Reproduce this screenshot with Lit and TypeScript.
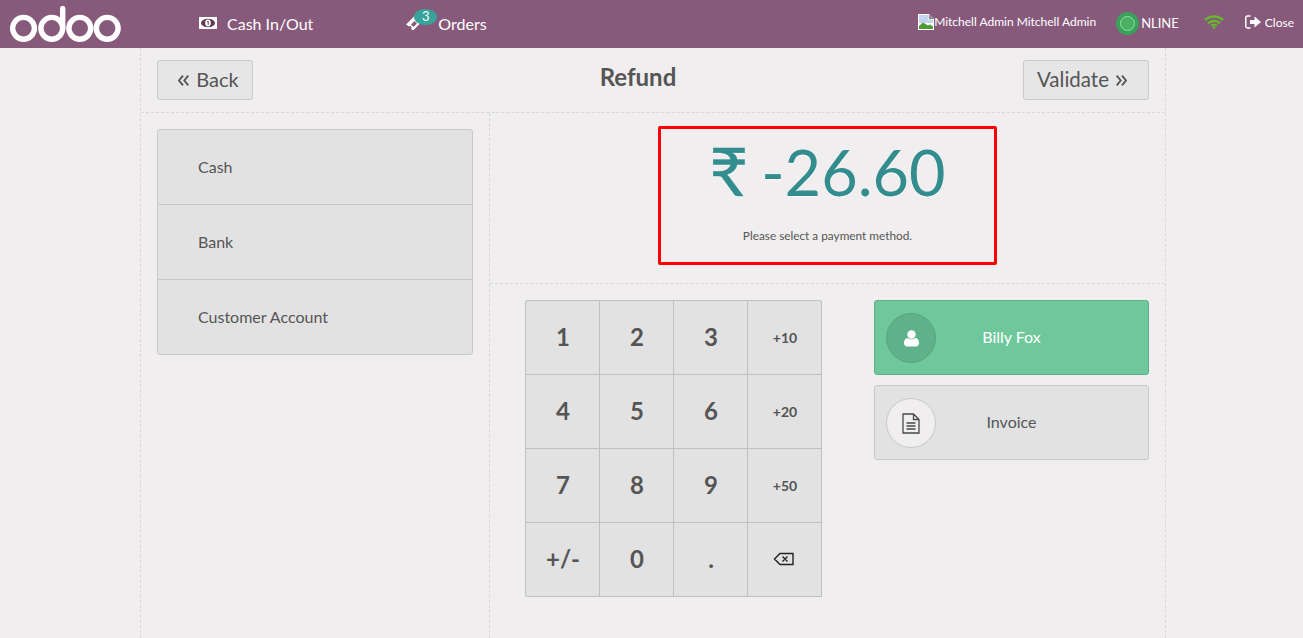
import { LitElement, html, css } from "lit";
import { customElement } from "lit/decorators.js";

const KEYS = ["1", "2", "3", "+10", "4", "5", "6", "+20", "7", "8", "9", "+50", "+/-", "0", "."];

@customElement("app-root")
export class AppRoot extends LitElement {
  static styles = css`
    :host {
      display: flex;
      flex-direction: column;
      height: 638px;
      overflow: hidden;
      background: #f0eeee;
      font-family: Lato, "Liberation Sans", sans-serif;
      color: #555555;
    }
    svg { display: block; flex: none; }

    /* top bar */
    .topbar {
      display: flex;
      align-items: center;
      height: 48px;
      flex: none;
      background: #875a7b;
      color: #fff;
    }
    .logo { margin-left: 10px; }
    .cash { display: flex; align-items: center; margin-left: 78px; padding-bottom: 2px; font-size: 16px; }
    .cash span { margin-left: 10px; }
    .orders { position: relative; display: flex; align-items: center; margin-left: 93px; padding-bottom: 2px; font-size: 16px; }
    .orders span.label { margin-left: 16px; }
    .badge {
      position: absolute;
      left: 8px;
      top: -5px;
      width: 23px;
      height: 16px;
      border-radius: 50%;
      background: #37a39b;
      font-size: 13px;
      line-height: 15px;
      text-align: center;
    }
    .user { display: flex; align-items: center; margin-left: auto; padding-bottom: 5px; font-size: 12px; height: 16px; }
    .online { display: flex; align-items: center; margin-left: 20px; padding-bottom: 2px; font-size: 13px; }
    .ring {
      width: 23px;
      height: 23px;
      box-sizing: border-box;
      border-radius: 50%;
      background: #3aa05a;
      border: 4px solid #3aa05a;
      display: flex;
      align-items: center;
      justify-content: center;
      margin-right: 2px;
    }
    .ring i { display: block; width: 15px; height: 15px; box-sizing: border-box; border: 1.5px solid #8fe3a8; border-radius: 50%; background: #4caf63; }
    .wifi { margin-left: 25px; margin-bottom: 4px; }
    .close { display: flex; align-items: center; margin-left: 21px; margin-right: 9px; padding-bottom: 4px; font-size: 12px; }
    .close span { margin-left: 4px; }

    /* screen */
    .screen {
      flex: 1;
      display: flex;
      flex-direction: column;
      width: 1024px;
      margin-left: 140px;
      border-left: 1px dashed #d9d8d8;
      border-right: 1px dashed #d9d8d8;
    }
    .head {
      display: flex;
      align-items: flex-start;
      height: 65px;
      flex: none;
      box-sizing: border-box;
      padding: 12px 16px 0;
      border-bottom: 1px dashed #d9d8d8;
    }
    .btn {
      display: flex;
      align-items: center;
      justify-content: center;
      gap: 7px;
      height: 40px;
      box-sizing: border-box;
      padding-bottom: 3px;
      background: #e6e6e6;
      border: 1px solid #cacaca;
      border-radius: 3px;
      font-size: 20px;
    }
    .btn svg { margin-top: 4px; }
    .back { width: 96px; padding-left: 7px; }
    .validate { width: 126px; padding-right: 8px; font-size: 20.5px; }
    h1 {
      flex: 1;
      margin: 0;
      text-align: center;
      font-size: 24px;
      font-weight: 700;
      line-height: 34px;
    }
    .body { flex: 1; display: flex; }
    .methods {
      width: 349px;
      flex: none;
      box-sizing: border-box;
      padding: 16px 16px 0;
      border-right: 1px dashed #d9d8d8;
    }
    .method-list {
      border: 1px solid #c8c8c8;
      border-radius: 3px;
      background: #e2e2e2;
    }
    .method {
      height: 75px;
      box-sizing: border-box;
      display: flex;
      align-items: center;
      padding: 0 0 1px 40px;
      font-size: 16px;
      border-bottom: 1px solid #c8c8c8;
    }
    .method:last-child { height: 74px; border-bottom: 0; }

    .pay { flex: 1; display: flex; flex-direction: column; }
    .status {
      height: 171px;
      flex: none;
      box-sizing: border-box;
      padding-top: 13px;
      border-bottom: 1px dashed #d9d8d8;
    }
    .amount-box {
      width: 339px;
      height: 139px;
      box-sizing: border-box;
      margin-left: 168px;
      border: 3px solid #ff0000;
      border-radius: 2px;
      text-align: center;
    }
    .amount {
      font-size: 63px;
      line-height: 84px;
      margin-top: 1px;
      color: #338c8e;
      text-shadow: 0 1px 1px #fff;
      white-space: nowrap;
    }
    .currency {
      font-size: 67px;
      line-height: 0;
      letter-spacing: -3px;
      -webkit-text-stroke: 0.5px #338c8e;
    }
    .hint { margin-top: 14px; font-size: 11.8px; line-height: 16px; }

    .pads { display: flex; align-items: flex-start; padding: 16px 16px 0 35px; }
    .numpad {
      display: grid;
      grid-template-columns: repeat(4, 74px);
      grid-auto-rows: 74px;
      width: 297px;
      box-sizing: border-box;
      background: #e2e2e2;
      border-left: 1px solid #c0c0c0;
      border-top: 1px solid #c0c0c0;
      border-radius: 3px;
    }
    .key {
      display: flex;
      align-items: center;
      justify-content: center;
      box-sizing: border-box;
      padding: 0 0 2px 1px;
      border-right: 1px solid #c0c0c0;
      border-bottom: 1px solid #c0c0c0;
      font-size: 24px;
      font-weight: 700;
    }
    .key.small { padding-bottom: 0; font-size: 14px; }
    .key svg { margin-right: 3px; }
    .side { margin-left: 52px; width: 275px; display: flex; flex-direction: column; gap: 10px; }
    .opt {
      position: relative;
      height: 75px;
      box-sizing: border-box;
      display: flex;
      align-items: center;
      justify-content: center;
      padding-bottom: 2px;
      background: #e2e2e2;
      border: 1px solid #c8c8c8;
      border-radius: 3px;
      font-size: 16px;
    }
    .opt.on { background: #6ec89b; border-color: #5cb18a; color: #fff; }
    .dot {
      position: absolute;
      left: 11px;
      top: 12px;
      width: 50px;
      height: 50px;
      box-sizing: border-box;
      border-radius: 50%;
      display: flex;
      align-items: center;
      justify-content: center;
      background: #f0eeee;
      border: 1px solid #c8c8c8;
    }
    .opt.on .dot { background: #5fb189; border-color: #58a680; }
  `;

  render() {
    return html`
      <div class="topbar">
        <svg class="logo" width="111" height="36" viewBox="0 0 111 36" fill="none" stroke="#fff" stroke-width="5.4">
          <circle cx="13.5" cy="22.3" r="10.9"/>
          <circle cx="41.8" cy="22.3" r="10.9"/>
          <path d="M52.7 22.3V2.6" stroke-linecap="round"/>
          <circle cx="69.8" cy="22.3" r="10.9"/>
          <circle cx="97.2" cy="22.3" r="10.9"/>
        </svg>
        <div class="cash">
          <svg width="18" height="12" viewBox="0 0 18 12">
            <path fill="#fff" d="M0 0h18v12H0z"/>
            <ellipse cx="9" cy="6" rx="7" ry="4.300" fill="#5b3d54"/>
            <ellipse cx="9" cy="6" rx="2.800" ry="3.400" fill="#fff"/>
            <path stroke="#5b3d54" stroke-width="1" fill="none" d="M8.200 4.700l1-.5v3.600"/>
          </svg>
          <span>Cash In/Out</span>
        </div>
        <div class="orders">
          <svg width="16" height="16" viewBox="0 0 16 16">
            <path fill="#fff" d="M0 9.500L9 .5l6.500 6.500-8.500 8.500-2-2 .8-1.300-1.500-1.500-1.300.8z"/>
            <path fill="#875a7b" d="M5 9.500l3.500-3.500 2.500 2.500L7.500 12z"/>
          </svg>
          <div class="badge">3</div>
          <span class="label">Orders</span>
        </div>
        <div class="user">
          <svg width="16" height="16" viewBox="0 0 16 16">
            <path fill="#fff" d="M0 0h11l5 5v11H0z"/>
            <path fill="#c3d4ee" d="M1 1h9.500v4.500H15V9H1z"/>
            <path fill="#4f9a32" d="M1 15v-3l4-3.500 5 3 2-1 3 2v2.500z"/>
            <path fill="#8a8a8a" d="M11 0l5 5h-5z"/>
          </svg>
          <span>Mitchell Admin Mitchell Admin</span>
        </div>
        <div class="online">
          <div class="ring"><i></i></div>
          <span>NLINE</span>
        </div>
        <svg class="wifi" width="20" height="14" viewBox="0 0 20 14" fill="none" stroke="#66b82c" stroke-width="2.500">
          <path d="M1 5c5-4.600 13-4.600 18 0M4 8.200c3.500-3 8.500-3 12 0"/>
          <path d="M7 10.800c1.800-1.300 4.200-1.300 6 0" stroke-width="2"/>
          <circle cx="10" cy="12.600" r="1.400" fill="#66b82c" stroke="none"/>
        </svg>
        <div class="close">
          <svg width="16" height="14" viewBox="0 0 16 14">
            <path fill="none" stroke="#fff" stroke-width="1.500" d="M5.500 1H2.500a1.700 1.700 0 0 0-1.700 1.700v8.600A1.700 1.700 0 0 0 2.500 13h3"/>
            <path fill="#fff" d="M5 5h4.500V1.500L16 7l-6.500 5.500V9H5z"/>
          </svg>
          <span>Close</span>
        </div>
      </div>

      <div class="screen">
        <div class="head">
          <div class="btn back">
            <svg width="11" height="11" viewBox="0 0 11 11" fill="none" stroke="#555" stroke-width="1.900"><path d="M5 .7L1 5.500l4 4.800M10.300.7l-4 4.800 4 4.800"/></svg>
            Back
          </div>
          <h1>Refund</h1>
          <div class="btn validate">
            Validate
            <svg width="11" height="11" viewBox="0 0 11 11" fill="none" stroke="#555" stroke-width="1.900"><path d="M.7.7l4 4.800-4 4.800M6 .7l4 4.800-4 4.800"/></svg>
          </div>
        </div>
        <div class="body">
          <div class="methods">
            <div class="method-list">
              <div class="method">Cash</div>
              <div class="method">Bank</div>
              <div class="method">Customer Account</div>
            </div>
          </div>
          <div class="pay">
            <div class="status">
              <div class="amount-box">
                <div class="amount"><span class="currency">₹</span> -26.60</div>
                <div class="hint">Please select a payment method.</div>
              </div>
            </div>
            <div class="pads">
              <div class="numpad">
                ${KEYS.map((k) => html`<div class="key ${k.length === 3 && k !== "+/-" ? "small" : ""}">${k}</div>`)}
                <div class="key">
                  <svg width="21" height="14" viewBox="0 0 21 14" fill="none" stroke="#222" stroke-width="1.400">
                    <path d="M20 1.500H7L1.500 7 7 12.500h13zM9.500 4.500l5 5M14.500 4.500l-5 5"/>
                  </svg>
                </div>
              </div>
              <div class="side">
                <div class="opt on">
                  <div class="dot">
                    <svg width="15" height="17" viewBox="0 0 15 17" fill="#fff">
                      <circle cx="7.500" cy="4.500" r="4.200"/>
                      <path d="M0 13c0-3 1.500-5 3.500-5 1 .8 2.500 1.300 4 1.300S10.500 8.800 11.500 8c2 0 3.500 2 3.500 5 0 2.200-1.400 3.500-3 3.500H3c-1.600 0-3-1.300-3-3.500z"/>
                    </svg>
                  </div>
                  Billy Fox
                </div>
                <div class="opt">
                  <div class="dot">
                    <svg width="18" height="21" viewBox="0 0 18 21" fill="none" stroke="#4a4a4a" stroke-width="1.300">
                      <path d="M1 1h10.500L17 6.500V20H1zM11.500 1v5.500H17M4.500 10h9M4.500 13h9M4.500 16h9"/>
                    </svg>
                  </div>
                  Invoice
                </div>
              </div>
            </div>
          </div>
        </div>
      </div>
    `;
  }
}
